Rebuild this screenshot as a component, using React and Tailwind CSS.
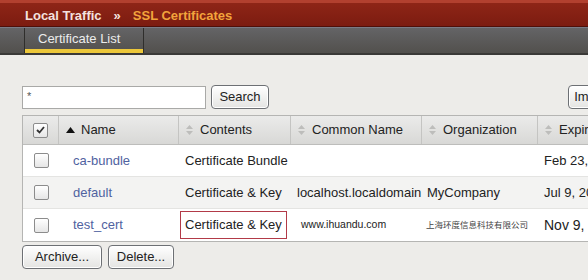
const cols = "grid grid-cols-[36px_120px_112px_131px_116px_1fr]";

const SortIcon = ({ active }) =>
  active ? (
    <svg width="9" height="6" viewBox="0 0 9 6" className="mr-[6px]">
      <path d="M0 6 L4.5 0 L9 6 Z" fill="#111" />
    </svg>
  ) : (
    <svg width="7" height="10" viewBox="0 0 7 10" className="mr-[7px]">
      <path d="M0 4 L3.5 0 L7 4 Z" fill="#bdbdbb" />
      <path d="M0 6 L3.5 10 L7 6 Z" fill="#bdbdbb" />
    </svg>
  );

const Checkbox = ({ checked }) => (
  <div className="w-[15px] h-[15px] border border-[#8c8c8c] rounded-[2px] bg-gradient-to-b from-white to-[#e6e6e6] flex items-center justify-center">
    {checked && (
      <svg width="9" height="8" viewBox="0 0 9 8">
        <path d="M1 4 L3.5 6.5 L8 1" stroke="#333" strokeWidth="1.8" fill="none" />
      </svg>
    )}
  </div>
);

const Btn = ({ children, className = "" }) => (
  <button
    className={
      "h-[24px] rounded-[4px] border border-[#6d7074] bg-gradient-to-b from-white to-[#e4e4e2] text-[13px] text-[#222] shadow-[inset_0_0_0_1px_#fff] " +
      className
    }
  >
    {children}
  </button>
);

const headers = [
  { name: "Name", active: true },
  { name: "Contents" },
  { name: "Common Name" },
  { name: "Organization" },
  { name: "Expiration" },
];

const rows = [
  { name: "ca-bundle", contents: "Certificate Bundle", cn: "", org: "", exp: "Feb 23, 2", bg: "bg-white" },
  { name: "default", contents: "Certificate & Key", cn: "localhost.localdomain", org: "MyCompany", exp: "Jul 9, 2012", bg: "bg-[#f3f3f2]" },
  { name: "test_cert", contents: "Certificate & Key", cn: "www.ihuandu.com", org: "上海环度信息科技有限公司", exp: "Nov 9, 2", bg: "bg-white", boxed: true },
];

export default function App() {
  return (
    <div
      className="w-[588px] h-[280px] overflow-hidden bg-[#edece9] text-[#222]"
      style={{ fontFamily: '"Liberation Sans", Arial, "Noto Sans CJK SC", sans-serif' }}
    >
      {/* title bar */}
      <div className="h-[27px] border-t-[3px] border-[#b2402f] bg-gradient-to-b from-[#8e2517] to-[#7c1c10] border-b border-b-[#4f0f08] flex items-center pl-[25px] pt-[2px] text-[13px] font-bold">
        <span className="text-[#f4e2df]">Local Traffic</span>
        <span className="text-[#f4e2df] mx-[12px]">»</span>
        <span className="text-[#f2a43c]">SSL Certificates</span>
      </div>

      {/* tab bar */}
      <div className="h-[28px] bg-gradient-to-b from-[#646466] to-[#52504d] border-t border-[#7a7b86] border-b-2 border-b-[#3a3937] flex">
        <div className="ml-[24px] w-[120px] border-x border-[#2f2e2c] flex flex-col">
          <div className="flex-1 flex items-center pl-[13px] text-[13px] text-[#ececec]">Certificate List</div>
          <div className="h-[4px] bg-[#ecc73a]" />
        </div>
      </div>

      <div className="w-[640px] pl-[22px] pr-[12px] pt-[30px]">
        {/* search row */}
        <div className="flex items-center">
          <div className="w-[184px] h-[23px] border border-[#a9a9a7] bg-white text-[11px] pl-[4px] leading-[18px] text-[#555]">*</div>
          <Btn className="ml-[5px] w-[58px]">Search</Btn>
          <Btn className="ml-auto w-[60px]">Import...</Btn>
        </div>

        {/* table */}
        <div className="mt-[6px] border border-[#b5b5b3] bg-white">
          <div className={cols + " h-[29px] bg-gradient-to-b from-[#ebebea] to-[#d8d8d6] border-b border-[#bdbdbb] text-[13px]"}>
            <div className="flex items-center justify-center border-r border-[#c4c4c2]">
              <Checkbox checked />
            </div>
            {headers.map((h) => (
              <div key={h.name} className="flex items-center pl-[7px] border-r border-[#c4c4c2] whitespace-nowrap">
                <SortIcon active={h.active} />
                {h.name}
              </div>
            ))}
          </div>
          {rows.map((r) => (
            <div key={r.name} className={cols + " h-[32px] text-[13px] border-b border-[#e4e4e2] last:border-b-0 " + r.bg}>
              <div className="flex items-center justify-center">
                <Checkbox />
              </div>
              <div className="flex items-center pl-[14px] text-[#4f62a0]">{r.name}</div>
              <div className="flex items-center pl-[1px]">
                <span className={r.boxed ? "border border-[#b23a48] px-[4px] py-[3px]" : "pl-[5px]"}>{r.contents}</span>
              </div>
              <div className={"flex items-center whitespace-nowrap " + (r.boxed ? "text-[10.5px] pl-[10px]" : "pl-[6px]")}>{r.cn}</div>
              <div className={"flex items-center whitespace-nowrap overflow-hidden " + (r.boxed ? "text-[8.5px] pl-[4px] text-[#444]" : "pl-[5px]")}>{r.org}</div>
              <div className={"flex items-center pl-[6px] whitespace-nowrap " + (r.boxed ? "text-[14px]" : "")}>{r.exp}</div>
            </div>
          ))}
        </div>

        {/* actions */}
        <div className="flex gap-[6px] mt-[3px]">
          <Btn className="w-[80px]">Archive...</Btn>
          <Btn className="w-[66px]">Delete...</Btn>
        </div>
      </div>
    </div>
  );
}
